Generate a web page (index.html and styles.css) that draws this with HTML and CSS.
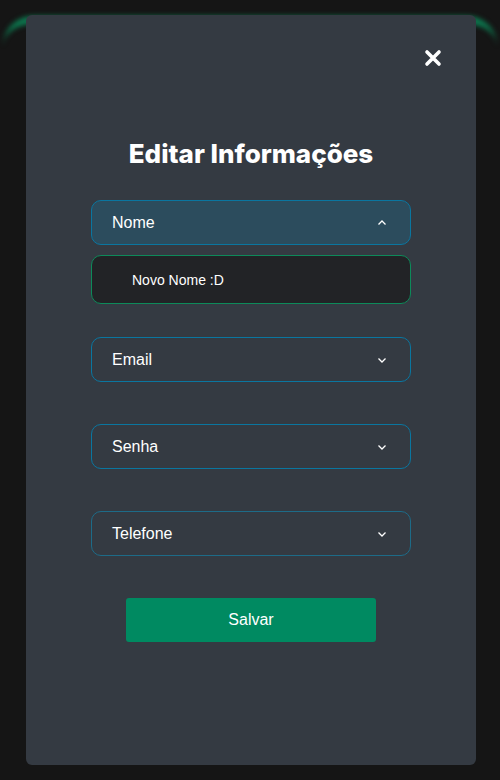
FILE: index.html
```html
<!DOCTYPE html>
<html lang="pt-BR">
<head>
<meta charset="utf-8">
<link rel="stylesheet" href="styles.css">
</head>
<body>
<div class="glow"></div>
<div class="modal">
  <div class="top">
    <button class="close" aria-label="Fechar">
      <svg width="18" height="18" viewBox="0 0 18 18"><path d="M3 3 L15 15 M15 3 L3 15" stroke="#fff" stroke-width="3.6" stroke-linecap="round"/></svg>
    </button>
  </div>
  <h1 class="title">Editar Informações</h1>
  <div class="fields">
    <div class="field open">
      <div class="head"><span>Nome</span>
        <svg class="chev" width="12" height="8" viewBox="0 0 12 8"><path d="M2.5 5.5 L6 2 L9.5 5.5" fill="none" stroke="#fff" stroke-width="1.3"/></svg>
      </div>
      <div class="input">Novo Nome :D</div>
    </div>
    <div class="field">
      <div class="head"><span>Email</span>
        <svg class="chev" width="12" height="8" viewBox="0 0 12 8"><path d="M2.5 2.5 L6 6 L9.5 2.5" fill="none" stroke="#fff" stroke-width="1.3"/></svg>
      </div>
    </div>
    <div class="field">
      <div class="head"><span>Senha</span>
        <svg class="chev" width="12" height="8" viewBox="0 0 12 8"><path d="M2.5 2.5 L6 6 L9.5 2.5" fill="none" stroke="#fff" stroke-width="1.3"/></svg>
      </div>
    </div>
    <div class="field">
      <div class="head dim"><span>Telefone</span>
        <svg class="chev" width="12" height="8" viewBox="0 0 12 8"><path d="M2.5 2.5 L6 6 L9.5 2.5" fill="none" stroke="#fff" stroke-width="1.3"/></svg>
      </div>
    </div>
  </div>
  <button class="save">Salvar</button>
</div>
</body>
</html>
```
FILE: styles.css
```css
* { box-sizing: border-box; }
html, body { margin: 0; padding: 0; }
body {
  background: #151515;
  width: 500px;
  height: 780px;
  position: relative;
  overflow: hidden;
  font-family: "Liberation Sans", Arial, sans-serif;
  padding-top: 15px;
}
.glow {
  position: absolute;
  left: 3px;
  right: 3px;
  top: 16px;
  height: 80px;
  border-top: 8px solid #0c7a50;
  border-radius: 30px 30px 0 0;
  filter: blur(2.5px);
}
.modal {
  position: relative;
  margin-left: 26px;
  width: 450px;
  height: 750px;
  background: #343a42;
  border-radius: 6px;
  display: flex;
  flex-direction: column;
  align-items: center;
}
.top {
  width: 100%;
  display: flex;
  justify-content: flex-end;
  padding: 34px 34px 0 0;
}
.close {
  background: none;
  border: none;
  padding: 0;
  width: 18px;
  height: 18px;
  display: block;
  cursor: pointer;
}
.close svg { display: block; }
.title {
  margin: 72px 0 0;
  font-family: Inter, "Liberation Sans", sans-serif;
  font-weight: 800;
  font-size: 26px;
  color: #fff;
  line-height: 30px;
}
.fields {
  margin-top: 31px;
  width: 320px;
  display: flex;
  flex-direction: column;
}
.field { margin-bottom: 42px; }
.field.open { margin-bottom: 33px; }
.head {
  height: 45px;
  border: 1px solid #0a76a0;
  border-radius: 10px;
  display: flex;
  align-items: center;
  justify-content: space-between;
  padding: 0 22px 0 20px;
  color: #fff;
  font-size: 16px;
}
.head.dim { border-color: #1d6b88; }
.open .head { background: #2c4c5d; }
.chev { display: block; }
.input {
  margin-top: 10px;
  height: 49px;
  background: #222326;
  border: 1px solid #0d8a5a;
  border-radius: 10px;
  display: flex;
  align-items: center;
  padding-left: 40px;
  color: #fff;
  font-size: 14px;
}
.save {
  margin-top: 0;
  width: 250px;
  height: 44px;
  background: #008a61;
  border: none;
  border-radius: 3px;
  color: #fff;
  font-family: "Liberation Sans", Arial, sans-serif;
  font-size: 16px;
}
```
